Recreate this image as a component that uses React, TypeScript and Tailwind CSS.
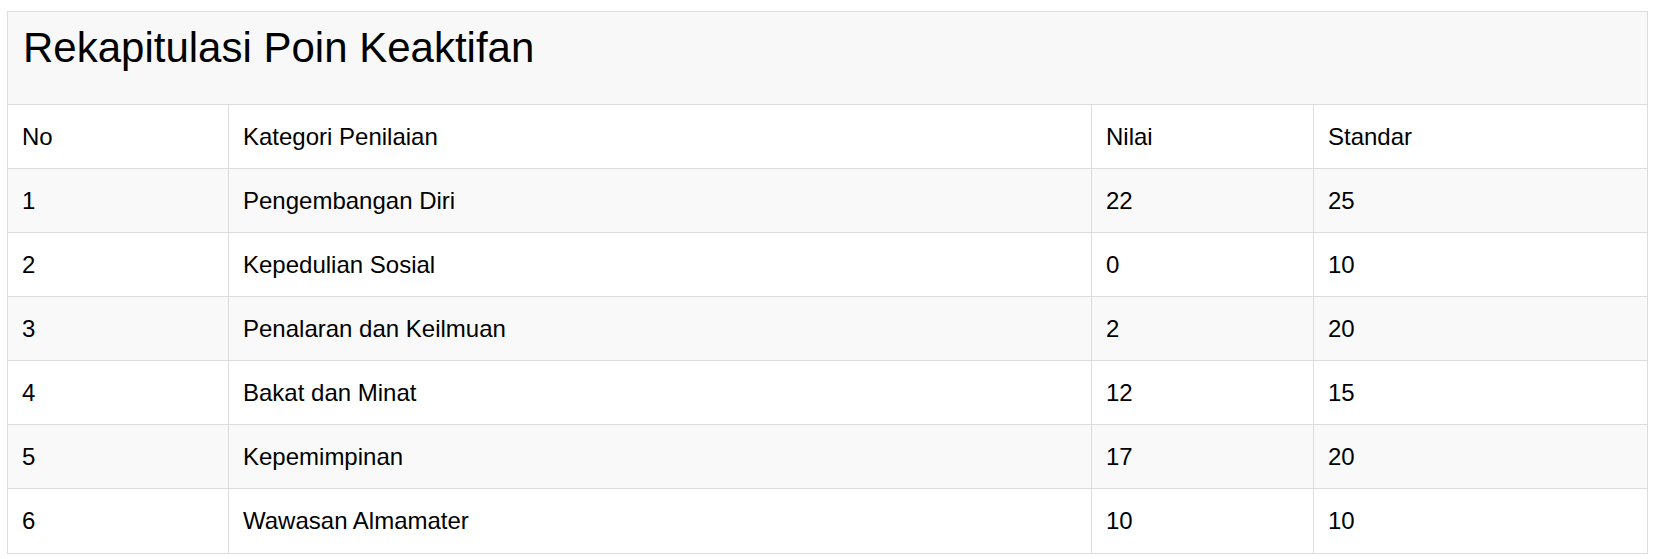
import React from "react";

const rows = [
  ["1", "Pengembangan Diri", "22", "25"],
  ["2", "Kepedulian Sosial", "0", "10"],
  ["3", "Penalaran dan Keilmuan", "2", "20"],
  ["4", "Bakat dan Minat", "12", "15"],
  ["5", "Kepemimpinan", "17", "20"],
  ["6", "Wawasan Almamater", "10", "10"],
];

function Row({ cells, striped, last }: { cells: string[]; striped: boolean; last: boolean }) {
  return (
    <div
      className={`grid grid-cols-[221px_863px_222px_1fr] h-[64px] ${last ? "" : "border-b border-[#dddddd]"} ${striped ? "bg-[#f9f9f9]" : "bg-white"}`}
    >
      {cells.map((c, i) => (
        <div
          key={i}
          className={`flex items-center pl-[14px] ${i < 3 ? "border-r border-[#dddddd]" : ""}`}
        >
          {c}
        </div>
      ))}
    </div>
  );
}

export default function App() {
  return (
    <div className="bg-white w-[1654px] h-[559px] pt-[11px] pl-[7px] pr-[6px] text-black" style={{ fontFamily: '"Liberation Sans", Arial, sans-serif' }}>
      <div className="border border-[#dddddd] text-[24px]">
        <div className="h-[93px] bg-[#f8f8f8] border-b border-[#dddddd] pl-[15px] pt-[12px]">
          <h3 className="text-[42px] leading-[1.15]">Rekapitulasi Poin Keaktifan</h3>
        </div>
        <Row cells={["No", "Kategori Penilaian", "Nilai", "Standar"]} striped={false} last={false} />
        {rows.map((r, i) => (
          <Row key={i} cells={r} striped={i % 2 === 0} last={i === rows.length - 1} />
        ))}
      </div>
    </div>
  );
}
